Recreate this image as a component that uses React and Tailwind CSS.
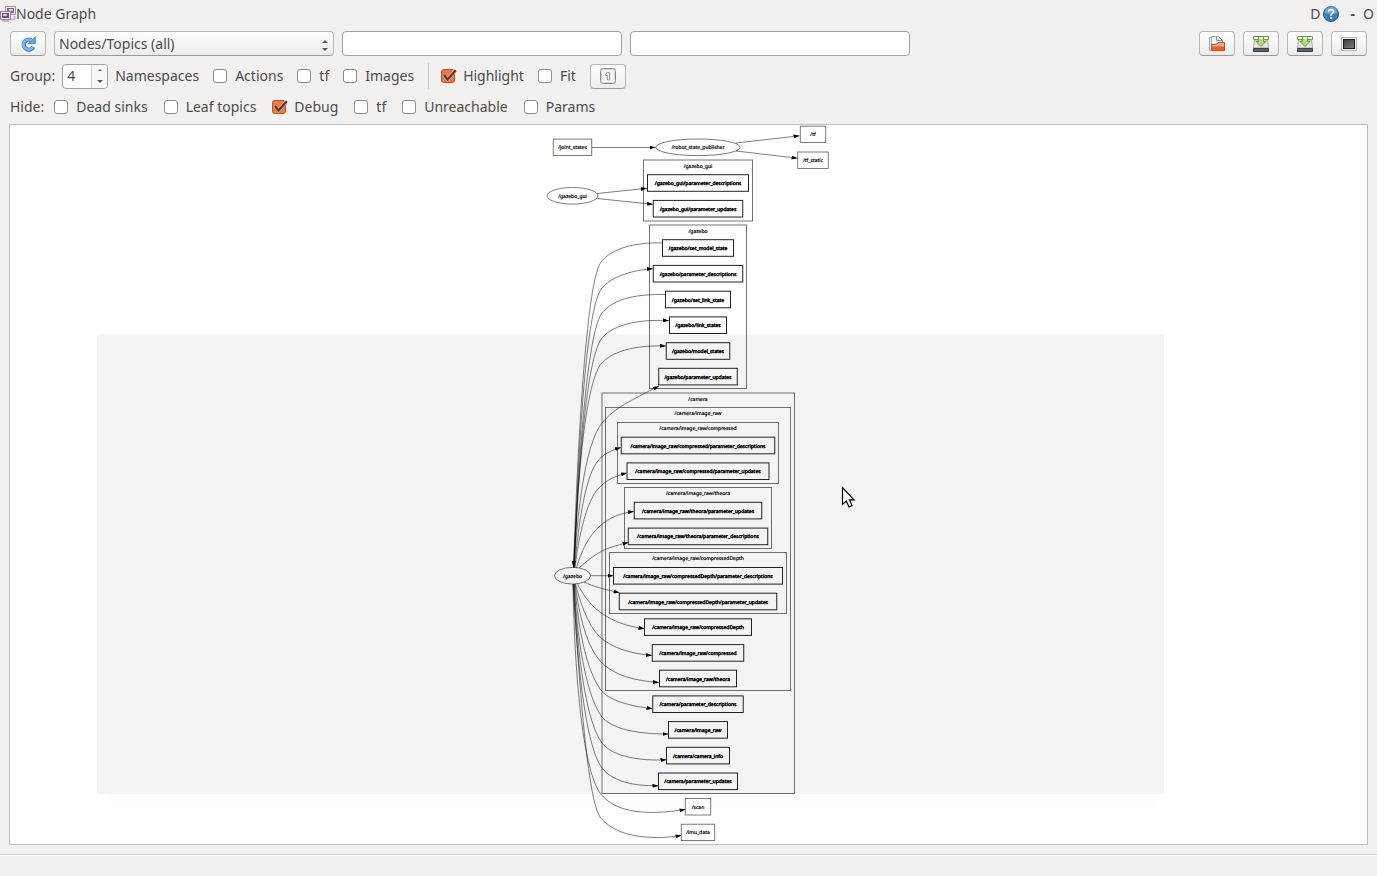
import { useState } from 'react';

const clusters = [
  { label: '/gazebo_gui', x: 643.5, y: 160, w: 109, h: 61 },
  { label: '/gazebo', x: 649.5, y: 225, w: 97, h: 163.5 },
  { label: '/camera', x: 602, y: 393, w: 192.5, h: 400.5 },
  { label: '/camera/image_raw', x: 605.5, y: 407.5, w: 185, h: 283 },
  { label: '/camera/image_raw/compressed', x: 617.5, y: 422.5, w: 161, h: 61 },
  { label: '/camera/image_raw/theora', x: 624.5, y: 487.5, w: 147, h: 61 },
  { label: '/camera/image_raw/compressedDepth', x: 609.5, y: 552.5, w: 177, h: 61 },
];

// topics inside a namespace, all centered on the same column
const topics = [
  { label: '/gazebo_gui/parameter_descriptions', y: 183, w: 101 },
  { label: '/gazebo_gui/parameter_updates', y: 208.7, w: 89.5 },
  { label: '/gazebo/set_model_state', y: 248, w: 71 },
  { label: '/gazebo/parameter_descriptions', y: 273.7, w: 89.5 },
  { label: '/gazebo/set_link_state', y: 299.5, w: 65 },
  { label: '/gazebo/link_states', y: 325.2, w: 57 },
  { label: '/gazebo/model_states', y: 351, w: 63.5 },
  { label: '/gazebo/parameter_updates', y: 376.6, w: 78.5 },
  { label: '/camera/image_raw/compressed/parameter_descriptions', y: 445.5, w: 153.5 },
  { label: '/camera/image_raw/compressed/parameter_updates', y: 471.2, w: 142 },
  { label: '/camera/image_raw/theora/parameter_updates', y: 510.6, w: 127.5 },
  { label: '/camera/image_raw/theora/parameter_descriptions', y: 536.4, w: 139.5 },
  { label: '/camera/image_raw/compressedDepth/parameter_descriptions', y: 575.8, w: 169 },
  { label: '/camera/image_raw/compressedDepth/parameter_updates', y: 601.5, w: 157.5 },
  { label: '/camera/image_raw/compressedDepth', y: 627.1, w: 107 },
  { label: '/camera/image_raw/compressed', y: 652.9, w: 91.5 },
  { label: '/camera/image_raw/theora', y: 678.5, w: 77 },
  { label: '/camera/parameter_descriptions', y: 704.2, w: 90.5 },
  { label: '/camera/image_raw', y: 729.9, w: 59 },
  { label: '/camera/camera_info', y: 755.6, w: 63 },
  { label: '/camera/parameter_updates', y: 781.3, w: 79 },
];

const looseTopics = [
  { label: '/joint_states', x: 572.5, y: 147.3, w: 38.5 },
  { label: '/tf', x: 813, y: 134.4, w: 25.5 },
  { label: '/tf_static', x: 813, y: 160.2, w: 30.5 },
  { label: '/scan', x: 698, y: 806.8, w: 25.5 },
  { label: '/imu_data', x: 698, y: 832.4, w: 33.5 },
];

const nodes = [
  { label: '/robot_state_publisher', x: 698, y: 147.3, rx: 42.2 },
  { label: '/gazebo_gui', x: 572.5, y: 195.8, rx: 25.4 },
  { label: '/gazebo', x: 572.5, y: 575.7, rx: 18 },
];

const edges = [
  'M592,147.5 L655.5,147.5',
  'M736,143 L799.5,135.8',
  'M736,151 L797.5,158.2',
  'M597,193.5 L647,188.3',
  'M597,198.5 L653,204.3',
  'M662.5,243 C636,242 612,248 601,262 C584,285 576,495 573.5,567',
  'M574,567.5 C577,500 583,310 602,288 C611,277 632,270 653,268.7',
  'M665.5,294.5 C638,294 614,298 602,313 C585,335 577,500 573.5,567',
  'M574,567.5 C577,505 584,360 602,338 C614,324 640,319 669,320.7',
  'M574,567.5 C577,505 582,395 600,365 C612,350 638,345 666,346',
  'M574,567.5 C577,520 584,445 602,423 C614,408 632,400 659,386',
  'M574.5,567.5 C578,530 584,480 597,462 C603,454 612,450 621,447.5',
  'M575,567.5 C579,535 586,503 598,489 C606,480 615,476 627,473',
  'M576.5,567.5 C581,552 589,535 600,526 C610,517 621,513 634,511.5',
  'M579,568 C587,561 594,555 602,551 C610,547 618,545 628.5,542.5',
  'M590.5,575.7 L613.5,575.7',
  'M584,582 C592,586 606,590 619.5,592.6',
  'M577.5,584 C582,593 590,605 600,612 C612,621 628,627 644.5,628.4',
  'M575.5,584 C579,598 587,625 600,637 C612,648 632,654 652,655.4',
  'M575,584 C578,605 584,643 600,661 C614,676 636,681 659,682.4',
  'M574.5,584 C577,610 582,662 600,689 C609,701 630,706 652.5,708.6',
  'M574,584 C576,620 583,692 602,717 C613,730 640,734 668.5,734',
  'M574,584 C576,630 583,718 602,743 C613,757 640,761 666.5,759.8',
  'M573.5,584 C576,640 583,742 602,768 C613,782 634,786 658.5,785.8',
  'M573,584 C574,650 580,764 600,793 C614,812 644,816 685.5,809.5',
  'M573,584 C578,660 586,795 600,817 C614,835 644,841 681.5,835.6',
];

function GraphText({ x, y, bold, children }) {
  return (
    <text
      x={x}
      y={y + 2}
      textAnchor="middle"
      className={bold ? 'stroke-black [stroke-width:0.4px]' : 'stroke-black [stroke-width:0.2px]'}
    >
      {children}
    </text>
  );
}

function Graph() {
  return (
    <svg viewBox="10 125 1357 719" className="block w-full h-auto text-[5px] font-['Noto_Sans',sans-serif]" role="img" aria-label="Node graph" textRendering="geometricPrecision">
      <defs>
        <marker id="arrow" viewBox="0 0 6 4" refX="6" refY="2" markerWidth="6" markerHeight="4" markerUnits="userSpaceOnUse" orient="auto">
          <path d="M0,0 L6,2 L0,4 Z" fill="#000" />
        </marker>
      </defs>

      <rect x="110" y="794" width="1045" height="9" fill="#fdfdfd" />
      <rect x="97" y="334.5" width="1067" height="459.5" fill="#f4f4f4" />

      <g fill="none" stroke="#000" strokeOpacity="0.55" strokeWidth="1">
        {clusters.map((c) => (
          <rect key={c.label} x={c.x} y={c.y} width={c.w} height={c.h} />
        ))}
      </g>
      <g fill="none" stroke="#000" strokeOpacity="0.85" strokeWidth="0.6">
        {edges.map((d) => (
          <path key={d} d={d} markerEnd="url(#arrow)" />
        ))}
      </g>
      <g fill="none" stroke="#222" strokeWidth="1">
        {topics.map((t) => (
          <rect key={t.label} x={698 - t.w / 2} y={t.y - 8.3} width={t.w} height="16.6" />
        ))}
      </g>
      <g fill="none" stroke="#000" strokeOpacity="0.65" strokeWidth="0.8">
        {looseTopics.map((t) => (
          <rect key={t.label} x={t.x - t.w / 2} y={t.y - 8.2} width={t.w} height="16.4" />
        ))}
        {nodes.map((n) => (
          <ellipse key={n.label} cx={n.x} cy={n.y} rx={n.rx} ry="8.3" />
        ))}
      </g>

      {clusters.map((c) => (
        <GraphText key={c.label} x={698} y={c.y + 5.7}>{c.label}</GraphText>
      ))}
      {topics.map((t) => (
        <GraphText key={t.label} x={698} y={t.y} bold>{t.label}</GraphText>
      ))}
      {[...looseTopics, ...nodes].map((t) => (
        <GraphText key={t.label} x={t.x} y={t.y}>{t.label}</GraphText>
      ))}

      {/* pointer */}
      <path d="M842.5,487.5 V504.5 L846.3,501 L849,507 L852,505.6 L849.4,499.8 H854 Z" fill="#fff" stroke="#000" strokeWidth="1.2" />
    </svg>
  );
}

function CheckOption({ label, defaultChecked = false }) {
  const [checked, setChecked] = useState(defaultChecked);
  return (
    <label className="flex items-center gap-2 whitespace-nowrap">
      <span className="relative flex">
        <input
          type="checkbox"
          checked={checked}
          onChange={(e) => setChecked(e.target.checked)}
          className="appearance-none size-3.5 rounded-[3px] border border-[#8f8c89] bg-white checked:border-[#b5532f] checked:bg-[#f07746]"
        />
        {checked && (
          <svg viewBox="0 0 16 14" className="absolute left-0 top-0 h-3.5 w-4 pointer-events-none" fill="none">
            <path d="M3,6 L6.5,10.5 L14.5,1.5" stroke="#f9b08f" strokeWidth="3.6" />
            <path d="M3,6 L6.5,10.5 L14.8,1.2" stroke="#4b3a33" strokeWidth="2.2" />
          </svg>
        )}
      </span>
      {label}
    </label>
  );
}

function ToolButton({ label, children }) {
  return (
    <button
      type="button"
      aria-label={label}
      className="flex h-[25px] w-9 shrink-0 items-center justify-center rounded border border-[#b9b6b2] border-b-[#9c9996] bg-linear-to-b from-white to-[#ececeb]"
    >
      {children}
    </button>
  );
}

function RefreshIcon() {
  return (
    <svg viewBox="0 0 16 16" className="size-4" fill="none">
      <path d="M13.2,11 A5,5 0 1 1 11.2,4.2" stroke="#3f78b5" strokeWidth="4.2" />
      <path d="M15.3,0.8 V7.5 H8.2 Z" fill="#6ea9de" stroke="#3f78b5" strokeWidth="0.8" />
      <path d="M12.6,11.2 A5,5 0 1 1 11.6,4.6" stroke="#7fb5e6" strokeWidth="2.6" />
    </svg>
  );
}

function OpenIcon() {
  return (
    <svg viewBox="0 0 16 16" className="size-4">
      <path d="M0.5,1.5 H5 V14.5 H0.5 Z" fill="#f4f4f4" stroke="#a3a3a3" />
      <path d="M2.5,0.5 H9.5 L13.5,4.5 V14.5 H2.5 Z" fill="#f7f7f7" stroke="#a3a3a3" />
      <path d="M7.5,0.5 V4.5 H13.5 L9.5,0.5" fill="#e6e6e6" stroke="#8f8f8f" />
      <path d="M2.5,8.5 H7.5 L9,6.5 H15.5 V14.5 H2.5 Z" fill="#ee5f28" stroke="#b9532c" />
      <path d="M3,9 H7.8 L9.3,7 H15 V10.5 H3 Z" fill="#f6a982" />
    </svg>
  );
}

function SaveIcon() {
  return (
    <svg viewBox="0 0 16 16" className="size-4">
      <path d="M1.5,4 H14.5 L15.5,12 H0.5 Z" fill="#e8e8e8" stroke="#a8a8a8" />
      <path d="M0.5,12.5 H15.5 V15.5 H0.5 Z" fill="#5c6166" stroke="#3a3f43" />
      <path d="M1,11.5 H15" stroke="#c4c7c9" />
      <path d="M0.5,0.5 H15.5 V3.5 H0.5 Z" fill="#fff" stroke="#5fa23c" />
      <path d="M5.5,1 H10.5 V5.5 H13 L8,10.5 L3,5.5 H5.5 Z" fill="#b4de7c" stroke="#639f32" />
      <path d="M6,1 H10 V3 H6 Z" fill="#fff" />
    </svg>
  );
}

function ScreenIcon() {
  return (
    <svg viewBox="0 0 16 16" className="size-4">
      <defs>
        <linearGradient id="screen" x1="0" y1="0" x2="1" y2="1">
          <stop offset="0" stopColor="#3a3a3a" />
          <stop offset="1" stopColor="#808080" />
        </linearGradient>
      </defs>
      <rect x="0.5" y="1.5" width="15" height="13" fill="#f3f3f3" stroke="#b5b5b5" />
      <rect x="2.5" y="3.5" width="11" height="9" fill="url(#screen)" stroke="#1c1c1c" />
    </svg>
  );
}

function OneToOneIcon() {
  return (
    <svg viewBox="0 0 16 16" className="size-4" fill="none">
      <rect x="0.5" y="0.5" width="15" height="15" rx="3" fill="#f4f4f4" stroke="#888" />
      <rect x="1.5" y="1.5" width="13" height="13" rx="2" stroke="#d4d4d4" />
      <path d="M5.5,6 L7.5,4.5 H9.5 V12 H7.5 V7.5 H5.5 Z" fill="#fff" stroke="#999" />
    </svg>
  );
}

function WindowsIcon() {
  return (
    <svg viewBox="0 0 16 16" className="size-4">
      <rect x="5.5" y="0.5" width="10" height="8" fill="#eee" stroke="#9c9c9c" />
      <rect x="7" y="2" width="7" height="5" fill="#935a97" />
      <rect x="9" y="3" width="4" height="2" fill="#e4c7e4" />
      <path d="M10,13.5 H14.5 V10" fill="none" stroke="#b5b5b5" strokeWidth="1.5" />
      <rect x="0.5" y="5.5" width="10" height="8" fill="#eee" stroke="#8c8c8c" />
      <rect x="2" y="7" width="7" height="5" fill="#8a4a90" />
      <rect x="3" y="8" width="4" height="2" fill="#dcb8dd" />
      <path d="M2,15 H9" stroke="#a9a9a9" strokeWidth="1.5" />
    </svg>
  );
}

function HelpIcon() {
  return (
    <svg viewBox="0 0 16 16" className="size-4" fill="none">
      <circle cx="8" cy="8" r="7.5" fill="#3e7cb5" stroke="#27587f" />
      <path d="M1.5,7 A6.5,6.5 0 0 1 14.5,7 Q8,9 1.5,7" fill="#6ba3d3" />
      <path d="M5.6,5.8 C5.6,2.8 10.6,2.9 10.5,5.8 C10.4,7.5 8,7.5 8,9.8" stroke="#fff" strokeWidth="1.7" />
      <path d="M7.1,11.1 H8.9 V12.9 H7.1 Z" fill="#fff" />
    </svg>
  );
}

export default function App() {
  const [depth, setDepth] = useState(4);
  const [nodeFilter, setNodeFilter] = useState('');
  const [topicFilter, setTopicFilter] = useState('');

  const fieldClass = 'h-[25px] w-[280px] min-w-0 rounded border border-[#a5a29e] bg-white px-1 outline-none';

  return (
    <div className="flex min-h-screen flex-col bg-[#f2f1f0] font-['Noto_Sans',sans-serif] text-sm text-[#4c4c4c]">
      <header className="flex h-[27px] items-center justify-between pr-[3px]">
        <h1 className="flex items-center">
          <WindowsIcon />
          Node Graph
        </h1>
        <div className="flex items-center">
          <button type="button">D</button>
          <button type="button" aria-label="Help" className="ml-0.5"><HelpIcon /></button>
          <button type="button" className="ml-3 font-bold">-</button>
          <button type="button" className="ml-2">O</button>
        </div>
      </header>

      <div className="mt-1 flex items-center gap-2 px-2.5">
        <ToolButton label="Refresh"><RefreshIcon /></ToolButton>
        <div className="relative w-[280px]">
          <select
            aria-label="Graph type"
            className="h-[25px] w-full appearance-none rounded border border-[#b9b6b2] border-b-[#9c9996] bg-linear-to-b from-white to-[#ececeb] px-1 outline-none"
          >
            <option>Nodes/Topics (all)</option>
            <option>Nodes/Topics (active)</option>
            <option>Nodes only</option>
          </select>
          <svg viewBox="0 0 6 14" className="pointer-events-none absolute right-1.5 top-2 h-3.5 w-1.5" fill="#5a5a5a">
            <path d="M0,4 L3,1 L6,4 Z M0,9 L3,12 L6,9 Z" />
          </svg>
        </div>
        <input aria-label="Node filter" className={fieldClass} value={nodeFilter} onChange={(e) => setNodeFilter(e.target.value)} />
        <input aria-label="Topic filter" className={fieldClass} value={topicFilter} onChange={(e) => setTopicFilter(e.target.value)} />
        <div className="ml-auto flex gap-2">
          <ToolButton label="Open"><OpenIcon /></ToolButton>
          <ToolButton label="Save as DOT"><SaveIcon /></ToolButton>
          <ToolButton label="Save as SVG"><SaveIcon /></ToolButton>
          <ToolButton label="Save as image"><ScreenIcon /></ToolButton>
        </div>
      </div>

      <div className="mt-[7px] flex items-center gap-3.5 px-2.5">
        <div className="flex items-center gap-[7px]">
          <label htmlFor="depth">Group:</label>
          <div className="flex h-[25px] w-[46px] overflow-hidden rounded border border-[#a5a29e] bg-white">
            <input
              id="depth"
              type="number"
              value={depth}
              onChange={(e) => setDepth(Number(e.target.value))}
              className="w-7 appearance-none pl-1 outline-none [-moz-appearance:textfield] [&::-webkit-inner-spin-button]:appearance-none"
            />
            <div className="flex flex-1 flex-col border-l border-[#cfccc9] bg-[#f7f7f6]">
              <button type="button" aria-label="Increase" onClick={() => setDepth(depth + 1)} className="flex flex-1 items-center justify-center">
                <svg viewBox="0 0 4 2" className="h-0.5 w-1" fill="#5a5a5a"><path d="M0,2 L2,0 L4,2 Z" /></svg>
              </button>
              <button type="button" aria-label="Decrease" onClick={() => setDepth(depth - 1)} className="flex flex-1 items-center justify-center">
                <svg viewBox="0 0 6 3" className="h-[3px] w-1.5" fill="#5a5a5a"><path d="M0,0 L3,3 L6,0 Z" /></svg>
              </button>
            </div>
          </div>
          <span>Namespaces</span>
        </div>
        <CheckOption label="Actions" />
        <CheckOption label="tf" />
        <CheckOption label="Images" />
        <div className="flex items-center gap-3">
          <div className="h-[26px] w-px bg-[#c8c5c2]" />
          <CheckOption label="Highlight" defaultChecked />
        </div>
        <CheckOption label="Fit" />
        <ToolButton label="Fit in view"><OneToOneIcon /></ToolButton>
      </div>

      <div className="mt-2 flex h-5 items-center gap-4 px-2.5">
        <div className="flex items-center gap-2.5">
          <span>Hide:</span>
          <CheckOption label="Dead sinks" />
        </div>
        <CheckOption label="Leaf topics" />
        <CheckOption label="Debug" defaultChecked />
        <CheckOption label="tf" />
        <CheckOption label="Unreachable" />
        <CheckOption label="Params" />
      </div>

      <main className="mx-[9px] mt-[7px] flex-1 border border-[#bfbdb9] bg-white">
        <Graph />
      </main>

      <footer className="mt-[9px] h-[22px] border-t border-[#d2d0ce] shadow-[inset_0_1px_0_#fff]" />
    </div>
  );
}
